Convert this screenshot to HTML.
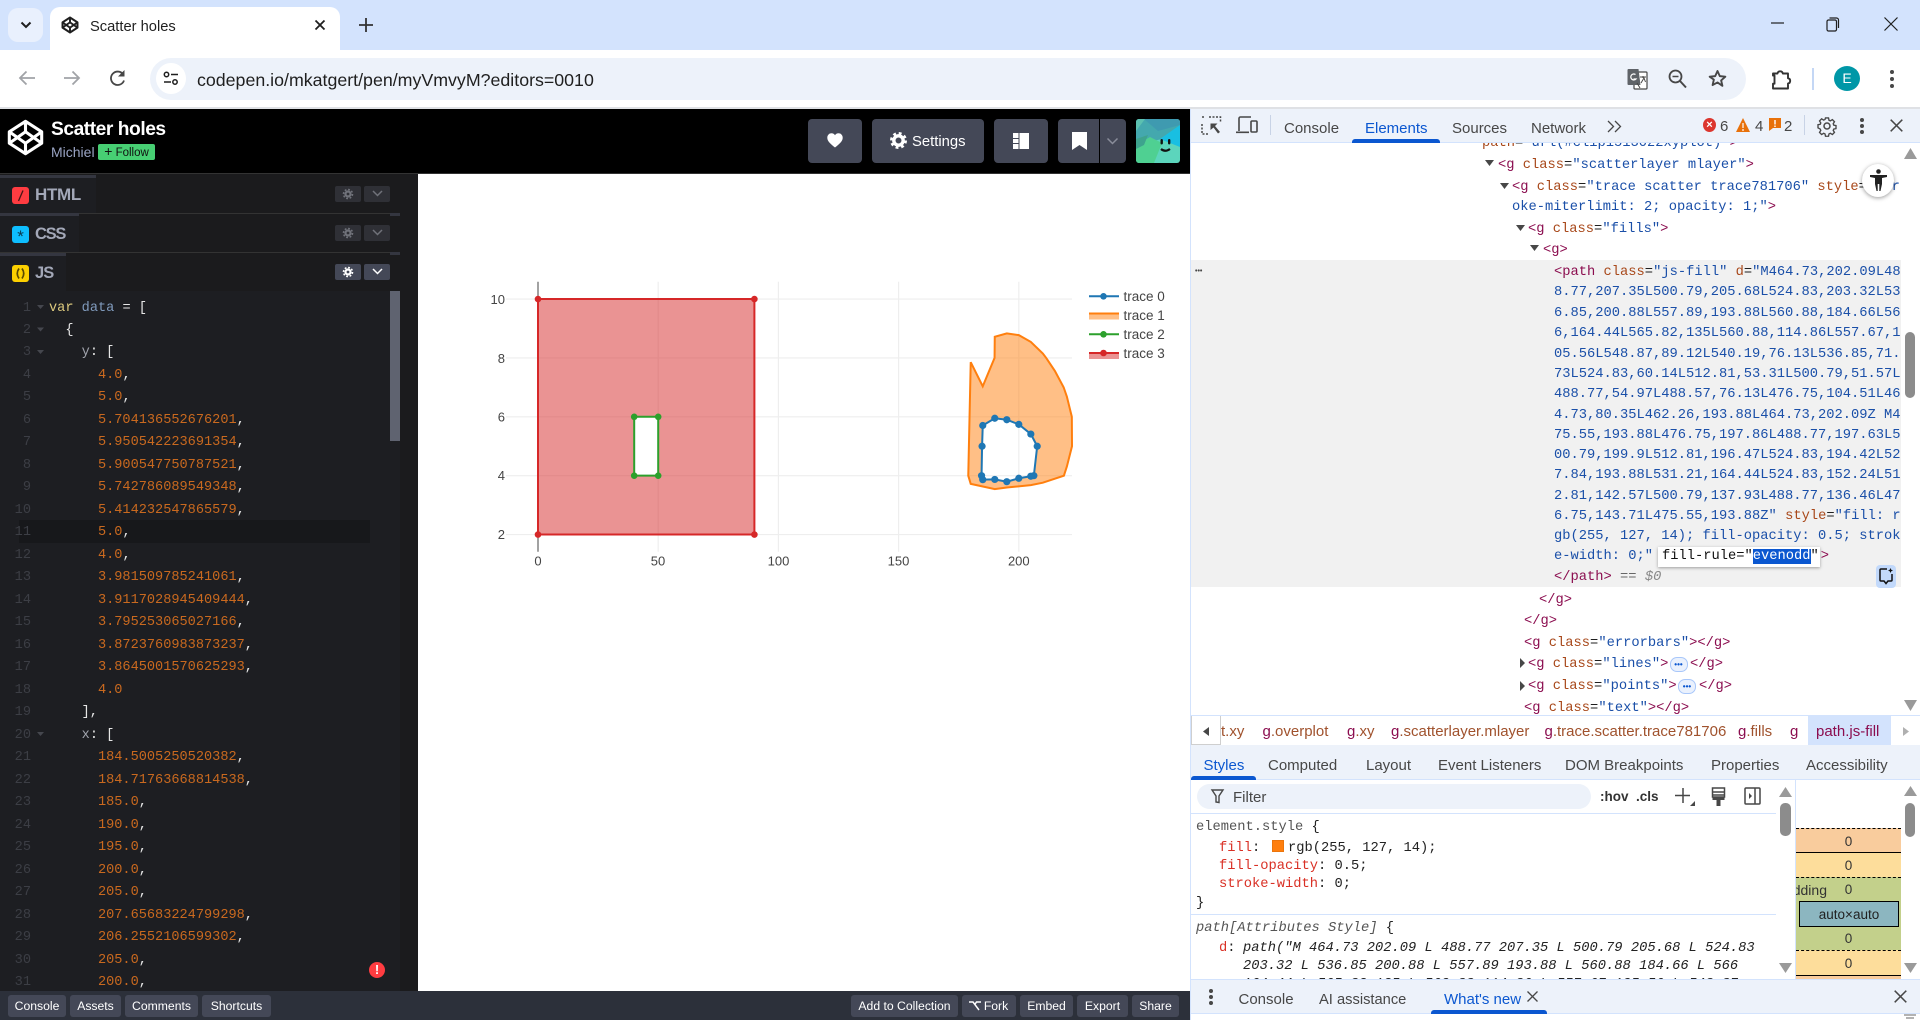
<!DOCTYPE html>
<html lang="en"><head><meta charset="utf-8"><title>Scatter holes</title>
<style>
*{box-sizing:border-box}
html,body{margin:0;padding:0;width:1920px;height:1020px;overflow:hidden;background:#fff;font-family:"Liberation Sans",sans-serif;color:#1f1f1f}
.a{position:absolute}
.t{position:absolute;white-space:nowrap;line-height:20px;font-size:15px;margin-top:1px}
.m{font-family:"Liberation Mono",monospace;font-size:13.75px;white-space:pre;position:absolute;line-height:20px;margin-top:1px}
svg{position:absolute;overflow:visible}
.btn{position:absolute;top:119px;height:44px;background:#444857;border-radius:4px}
.foot{position:absolute;top:995px;height:22px;background:#444857;border-radius:3px;color:#fff;font-size:12.2px;line-height:22px;text-align:center;white-space:nowrap}
.row{position:absolute;left:0;width:400px;background:#1b1b1d}
.tab{position:absolute;left:0;background:#1d1e22;border-top:3px solid #343640}
.sq{position:absolute;left:12px;width:17px;height:17px;border-radius:3px}
.lbl{position:absolute;left:35px;font-weight:bold;font-size:16.5px;line-height:20px;color:#a3a8b8;white-space:nowrap;letter-spacing:-.3px}
.mini{position:absolute;width:26px;height:16px;border-radius:2px;background:#2f3036}
pre{margin:0;font-family:"Liberation Mono",monospace;font-size:13.6px;line-height:22.48px;position:absolute}
.n{color:#c9691f}.w{color:#e6e6e6}.k{color:#a2a5ae}.v{color:#ddca7e}.d{color:#809bbd}
.tg{color:#8b0d4f}.at{color:#a8481a}.vl{color:#1a4fa8}
.tb{color:#474747}
.r{color:#d93025}
.bc{font-size:15px;color:#a0522d}.bc b{font-weight:normal;color:#8b0d4f}
.bm{position:absolute;left:1796px;width:105px}
.z{position:absolute;left:1796px;width:105px;text-align:center;font-size:13.5px;line-height:18px;color:#333;margin-top:1px}
</style></head><body>

<!-- tab strip -->
<div class="a" style="left:0;top:0;width:1920px;height:50px;background:#d3e3fd"></div>
<div class="a" style="left:8px;top:8px;width:35px;height:34px;background:#e9f0fd;border-radius:10px"></div>
<svg style="left:20px;top:20px" width="12" height="10" viewBox="0 0 12 10"><path d="M1.500 2.500 6 7l4.500-4.500" fill="none" stroke="#1f1f1f" stroke-width="2"/></svg>
<div class="a" style="left:50px;top:7px;width:290px;height:43px;background:#fff;border-radius:10px 10px 0 0"></div>
<svg style="left:61px;top:16px" width="18" height="18" viewBox="0 0 24 24"><path d="M12 2 22 8.500v7L12 22 2 15.500v-7zM12 2v6.500M12 15.500V22M2 8.500l10 7 10-7M2 15.500l10-7 10 7" fill="none" stroke="#1f1f1f" stroke-width="2.600" stroke-linejoin="round"/></svg>
<div class="t" style="left:90px;top:16px;font-size:14.700px">Scatter holes</div>
<svg style="left:314px;top:19px" width="12" height="12" viewBox="0 0 12 12"><path d="M1.500 1.500l9 9M10.500 1.500l-9 9" stroke="#1f1f1f" stroke-width="1.800"/></svg>
<svg style="left:359px;top:18px" width="14" height="14" viewBox="0 0 14 14"><path d="M7 0v14M0 7h14" stroke="#333" stroke-width="1.800"/></svg>
<svg style="left:1771px;top:22px" width="14" height="3"><path d="M0 1h13" stroke="#1f1f1f" stroke-width="1.200"/></svg>
<svg style="left:1826px;top:17px" width="14" height="15" viewBox="0 0 14 15"><rect x="1" y="3" width="9.500" height="11" rx="1.500" fill="none" stroke="#1f1f1f" stroke-width="1.200"/><path d="M3.500 1h7a2 2 0 0 1 2 2v8" fill="none" stroke="#1f1f1f" stroke-width="1.200"/></svg>
<svg style="left:1884px;top:17px" width="14" height="14" viewBox="0 0 14 14"><path d="M.500.500l13 13M13.500.500l-13 13" stroke="#1f1f1f" stroke-width="1.200"/></svg>

<!-- toolbar -->
<div class="a" style="left:0;top:50px;width:1920px;height:57px;background:#fff;border-radius:10px 10px 0 0"></div>
<div class="a" style="left:0;top:107px;width:1920px;height:2px;background:#dfe1e5"></div>
<div class="a" style="left:150px;top:58px;width:1596px;height:42px;background:#edf2fa;border-radius:21px"></div>
<div class="a" style="left:156px;top:63px;width:30px;height:31px;background:#fff;border-radius:50%"></div>
<svg style="left:18px;top:70px" width="18" height="16" viewBox="0 0 18 16"><path d="M17 8H2M8.500 1.500 2 8l6.500 6.500" fill="none" stroke="#a1a3a7" stroke-width="1.800"/></svg>
<svg style="left:63px;top:70px" width="18" height="16" viewBox="0 0 18 16"><path d="M1 8h15M9.500 1.500 16 8l-6.500 6.500" fill="none" stroke="#a1a3a7" stroke-width="1.800"/></svg>
<svg style="left:109px;top:70px" width="18" height="17" viewBox="0 0 18 17"><path d="M15 10.500A6.700 6.700 0 1 1 14 4.200" fill="none" stroke="#474747" stroke-width="1.800"/><path d="M15.500 0v6.500H9z" fill="#474747"/></svg>
<svg style="left:163px;top:71px" width="16" height="15" viewBox="0 0 16 15"><circle cx="3.500" cy="3.500" r="2.200" fill="none" stroke="#1f1f1f" stroke-width="1.500"/><circle cx="12" cy="11" r="2.200" fill="none" stroke="#1f1f1f" stroke-width="1.500"/><path d="M8 3.500h7M1 11h7" stroke="#1f1f1f" stroke-width="1.500"/></svg>
<div class="t" style="left:197px;top:68px;font-size:17.800px;color:#1f1f1f;margin-top:2px">codepen.io/mkatgert/pen/myVmvyM?editors=0010</div>
<svg style="left:1627px;top:68px" width="21" height="22" viewBox="0 0 21 22"><rect x="7" y="4" width="13" height="17" rx="1" fill="#fff" stroke="#474747" stroke-width="1.200"/><path d="M1.500 1h10l2 16h-12a1 1 0 0 1-1-1V2a1 1 0 0 1 1-1z" fill="#5f6368"/><path d="M10 15l3 5" stroke="#474747"/><path d="M13 9h6M16 8v2M14 15l3-5 1.500 4" fill="none" stroke="#474747" stroke-width="1"/><path d="M8.500 6.500A3 3 0 1 0 9 11H6.500" fill="none" stroke="#fff" stroke-width="1.200"/></svg>
<svg style="left:1668px;top:69px" width="19" height="20" viewBox="0 0 19 20"><circle cx="7.500" cy="7.500" r="6" fill="none" stroke="#474747" stroke-width="1.800"/><path d="M12 12l6 6.500" stroke="#474747" stroke-width="2"/><path d="M4.500 7.500h6" stroke="#474747" stroke-width="1.500"/></svg>
<svg style="left:1708px;top:69px" width="19" height="19" viewBox="0 0 24 24"><path d="M12 2.500l2.900 6.500 7 .7-5.300 4.700 1.600 6.900L12 17l-6.200 3.300 1.600-6.900L2.100 9.700l7-.7z" fill="none" stroke="#474747" stroke-width="2.400" stroke-linejoin="round"/></svg>
<svg style="left:1771px;top:68px" width="21" height="22" viewBox="0 0 21 22"><path d="M2 5.500h4.500a2.700 2.700 0 0 1 5.300 0H17v4.700a2.700 2.700 0 0 1 0 5.300v5H2v-4.800a0 0 0 0 0 0 0h1.500V7.500H2z" fill="none" stroke="#333" stroke-width="1.900" stroke-linejoin="round"/></svg>
<div class="a" style="left:1812px;top:68px;width:2px;height:22px;background:#c4d7f5"></div>
<div class="a" style="left:1834px;top:66px;width:26px;height:25px;border-radius:50%;background:#0097a7;color:#fff;font-size:14px;line-height:25px;text-align:center">E</div>
<svg style="left:1889px;top:69px" width="6" height="20"><circle cx="3" cy="3" r="2" fill="#474747"/><circle cx="3" cy="10" r="2" fill="#474747"/><circle cx="3" cy="17" r="2" fill="#474747"/></svg>

<!-- codepen header -->
<div class="a" style="left:0;top:109px;width:1190px;height:65px;background:#000;border-bottom:1px solid #333"></div>
<svg style="left:7px;top:119px" width="37" height="37" viewBox="0 0 24 24"><path d="M12 1.500 22.500 8.300v7.400L12 22.500 1.500 15.700V8.300zM12 1.500v6.800M12 15.700v6.800M1.500 8.300l10.500 7.400 10.500-7.400M1.500 15.700 12 8.300l10.500 7.400" fill="none" stroke="#fff" stroke-width="2" stroke-linejoin="round"/></svg>
<div class="t" style="left:51px;top:119px;font-size:19.200px;font-weight:bold;color:#fff;line-height:22px;letter-spacing:-.45px;margin-top:0">Scatter holes</div>
<div class="t" style="left:51px;top:142px;font-size:14px;color:#9aa4c4;margin-top:0">Michiel</div>
<div class="a" style="left:98px;top:144px;width:57px;height:16px;background:#47cf73;border-radius:2px;color:#111;font-size:11.500px;line-height:16px;text-align:center;white-space:nowrap"><span style="font-size:14px;line-height:14px">+</span> Follow</div>

<div class="btn" style="left:808px;width:54px"></div>
<svg style="left:827px;top:133px" width="16" height="15" viewBox="0 0 16 15"><path d="M8 14.500C3 10.500.300 8 .300 4.700.300 2 2.300.300 4.500.300 6 .300 7.300 1 8 2.300 8.700 1 10 .300 11.500.300c2.200 0 4.200 1.700 4.200 4.400C15.700 8 13 10.500 8 14.500z" fill="#fff"/></svg>
<div class="btn" style="left:872px;width:112px"></div>
<svg style="left:890px;top:132px" width="17" height="17" viewBox="0 0 20 20"><circle cx="10" cy="10" r="5.500" fill="none" stroke="#fff" stroke-width="4"/><circle cx="10" cy="10" r="8.500" fill="none" stroke="#fff" stroke-width="3" stroke-dasharray="3.340 3.340"/></svg>
<div class="t" style="left:912px;top:131px;color:#fff;font-size:14.800px">Settings</div>
<div class="btn" style="left:994px;width:54px"></div>
<svg style="left:1013px;top:133px" width="16" height="16" viewBox="0 0 16 16"><rect x="0" y="0" width="5.500" height="5" fill="#fff"/><rect x="0" y="6" width="5.500" height="4" fill="#fff"/><rect x="0" y="11" width="5.500" height="5" fill="#fff"/><rect x="6.500" y="0" width="9.500" height="16" fill="#fff"/></svg>
<div class="btn" style="left:1058px;width:68px"></div>
<div class="a" style="left:1099px;top:119px;width:1px;height:44px;background:#000"></div>
<svg style="left:1072px;top:132px" width="15" height="18" viewBox="0 0 15 18"><path d="M0 0h15v18l-7.500-5L0 18z" fill="#fff"/></svg>
<svg style="left:1107px;top:138px" width="11" height="7" viewBox="0 0 11 7"><path d="M.500.500 5.500 5.500 10.500.500" fill="none" stroke="#8a8d9a" stroke-width="1.500"/></svg>
<svg style="left:1136px;top:119px" width="44" height="44" viewBox="0 0 44 44"><defs><clipPath id="av"><rect width="44" height="44" rx="3"/></clipPath></defs><g clip-path="url(#av)"><rect width="44" height="44" fill="#5cd5bc"/><path d="M0 0h44v12L26 20 0 26z" fill="#44a8ae"/><path d="M8 0h36v6L22 12z" fill="#3f9ab0"/><path d="M0 0h9L0 12z" fill="#5cc0b0"/><path d="M44 6v22L24 20z" fill="#19bfe2"/><path d="M0 26l14-8 12 6-8 20H0z" fill="#4fd092"/><path d="M0 20l12-4-4 10-8 4z" fill="#3ea38e"/><rect x="24.500" y="20" width="2.400" height="5.500" rx="1.200" fill="#111"/><rect x="32" y="20" width="2.400" height="5.500" rx="1.200" fill="#111"/><path d="M25 30q4 3.500 9 0" fill="none" stroke="#111" stroke-width="2.200"/></g></svg>

<!-- editor column -->
<div class="a" style="left:0;top:174px;width:418px;height:817px;background:#1b1b1d"></div>
<div class="row" style="top:213px;height:1px;background:#333"></div>
<div class="row" style="top:252px;height:1px;background:#333"></div>
<div class="tab" style="top:175px;width:96px;height:38px"></div>
<div class="tab" style="top:213px;width:79px;height:39px"></div>
<div class="tab" style="top:253px;width:66px;height:38px"></div>
<div class="a" style="left:390px;top:213px;width:10px;height:3px;background:#343640"></div>
<div class="a" style="left:390px;top:252px;width:10px;height:3px;background:#343640"></div>
<div class="sq" style="top:187px;background:#ff3c41"></div>
<svg style="left:12px;top:187px" width="17" height="17"><path d="M11 3.500 6.500 14" stroke="#4a1416" stroke-width="1.300"/></svg>
<div class="sq" style="top:226px;background:#0ebeff"></div>
<div class="a" style="left:12px;top:226px;width:17px;height:17px;text-align:center;color:#0a3a50;font-size:17px;line-height:22px">*</div>
<div class="sq" style="top:265px;background:#fcd000"></div>
<svg style="left:12px;top:265px" width="17" height="17"><path d="M7 3.500Q3.500 8.500 7 13.500M10 3.500q3.500 5 0 10" fill="none" stroke="#5a4a00" stroke-width="1.700"/></svg>
<div class="lbl" style="top:185px;font-size:17px">HTML</div>
<div class="lbl" style="top:224px;letter-spacing:-1.300px">CSS</div>
<div class="lbl" style="top:263px;letter-spacing:-.9px">JS</div>

<div class="mini" style="left:335px;top:186px"></div><div class="mini" style="left:364px;top:186px"></div>
<div class="mini" style="left:335px;top:225px"></div><div class="mini" style="left:364px;top:225px"></div>
<div class="mini" style="left:335px;top:264px;background:#444857"></div><div class="mini" style="left:364px;top:264px;background:#444857"></div>
<svg style="left:0;top:0" width="417" height="300">
<g fill="none" stroke="#70727a"><g transform="translate(348,194)"><circle r="2.500" stroke-width="2.200"/><circle r="4.500" stroke-width="1.600" stroke-dasharray="1.800 1.730"/></g><g transform="translate(348,233)"><circle r="2.500" stroke-width="2.200"/><circle r="4.500" stroke-width="1.600" stroke-dasharray="1.800 1.730"/></g>
<path d="M373 191l4.500 4.500 4.500-4.500M373 230l4.500 4.500 4.500-4.500" stroke-width="1.500"/></g>
<g fill="none" stroke="#fff"><g transform="translate(348,272)"><circle r="2.500" stroke-width="2.200"/><circle r="4.500" stroke-width="1.600" stroke-dasharray="1.800 1.730"/></g><path d="M373 269l4.500 4.500 4.500-4.500" stroke-width="1.500"/></g>
</svg>

<!-- code -->
<div class="a" style="left:0;top:291px;width:400px;height:700px;background:#1d1e22;overflow:hidden">
<div class="a" style="left:19px;top:229px;width:351px;height:23px;background:#17181b"></div>
<pre style="left:0;top:6.500px;width:31px;text-align:right;color:#3c3e45">1
2
3
4
5
6
7
8
9
10
11
12
13
14
15
16
17
18
19
20
21
22
23
24
25
26
27
28
29
30
31
32</pre>
<pre class="w" style="left:49px;top:6.500px"><span class="v">var</span> <span class="d">data</span> = [
  {
    <span class="k">y</span>: [
      <span class="n">4.0</span>,
      <span class="n">5.0</span>,
      <span class="n">5.704136552676201</span>,
      <span class="n">5.950542223691354</span>,
      <span class="n">5.900547750787521</span>,
      <span class="n">5.742786089549348</span>,
      <span class="n">5.414232547865579</span>,
      <span class="n">5.0</span>,
      <span class="n">4.0</span>,
      <span class="n">3.981509785241061</span>,
      <span class="n">3.9117028945409444</span>,
      <span class="n">3.795253065027166</span>,
      <span class="n">3.8723760983873237</span>,
      <span class="n">3.8645001570625293</span>,
      <span class="n">4.0</span>
    ],
    <span class="k">x</span>: [
      <span class="n">184.5005250520382</span>,
      <span class="n">184.71763668814538</span>,
      <span class="n">185.0</span>,
      <span class="n">190.0</span>,
      <span class="n">195.0</span>,
      <span class="n">200.0</span>,
      <span class="n">205.0</span>,
      <span class="n">207.65683224799298</span>,
      <span class="n">206.2552106599302</span>,
      <span class="n">205.0</span>,
      <span class="n">200.0</span>,
      <span class="n">195.0</span></pre>
<svg style="left:37px;top:2px" width="8" height="460"><path d="M0 12h7l-3.500 4zM0 34.500h7l-3.500 4zM0 57h7l-3.500 4zM0 439h7l-3.500 4z" fill="#45474e"/></svg>
<div class="a" style="left:390px;top:0;width:10px;height:150px;background:#5f6370"></div>
</div>
<div class="a" style="left:369px;top:962px;width:16px;height:16px;border-radius:50%;background:#ff3c41;color:#fff;font-weight:bold;font-size:13px;line-height:16px;text-align:center">!</div>

<!-- preview -->
<div class="a" style="left:418px;top:174px;width:772px;height:817px;background:#fff"></div>
<svg style="left:0;top:0" width="1920" height="1020">
<g transform="translate(506,281.800)">
<g stroke="#eee" stroke-width="1.200" fill="none">
<path d="M152.200 0V270M272.400 0V270M392.600 0V270M512.800 0V270"/>
<path d="M0 17.250H566M0 76.130H566M0 135H566M0 193.880H566M0 252.750H566"/>
</g>
<path d="M32 0V270" stroke="#444" stroke-width="1"/>
<path fill-rule="evenodd" fill="#d62728" fill-opacity=".5" d="M32 17.250H248.400V252.750H32ZM128.200 135H152.200V193.880H128.200Z"/>
<path fill-rule="evenodd" fill="#ff7f0e" fill-opacity=".5" d="M464.730,202.090L488.770,207.350L500.790,205.680L524.830,203.320L536.850,200.880L557.890,193.880L560.880,184.660L566,164.440L565.820,135L560.880,114.860L557.670,105.560L548.870,89.120L540.190,76.130L536.850,71.730L524.830,60.140L512.810,53.310L500.790,51.570L488.770,54.970L488.570,76.130L476.750,104.510L464.730,80.350L462.260,193.880L464.730,202.090Z M475.550,193.880L476.750,197.860L488.770,197.630L500.790,199.900L512.810,196.470L524.830,194.420L527.840,193.880L531.210,164.440L524.830,152.240L512.810,142.570L500.790,137.930L488.770,136.460L476.750,143.710L475.550,193.880Z"/>
<path fill="none" stroke="#ff7f0e" stroke-width="2" d="M464.730,202.090L488.770,207.350L500.790,205.680L524.830,203.320L536.850,200.880L557.890,193.880L560.880,184.660L566,164.440L565.820,135L560.880,114.860L557.670,105.560L548.870,89.120L540.190,76.130L536.850,71.730L524.830,60.140L512.810,53.310L500.790,51.570L488.770,54.970L488.570,76.130L476.750,104.510L464.730,80.350L462.260,193.880L464.730,202.090Z"/>
<path fill="none" stroke="#1f77b4" stroke-width="2" d="M475.550,193.880L476.070,164.440L476.750,143.710L488.770,136.460L500.790,137.930L512.810,142.570L524.830,152.240L531.210,164.440L527.840,193.880L524.830,194.420L512.810,196.470L500.790,199.900L488.770,197.630L476.750,197.860L475.550,193.880Z"/>
<g fill="#1f77b4"><circle cx="475.550" cy="193.880" r="3.600"/><circle cx="476.070" cy="164.440" r="3.600"/><circle cx="476.750" cy="143.710" r="3.600"/><circle cx="488.770" cy="136.460" r="3.600"/><circle cx="500.790" cy="137.930" r="3.600"/><circle cx="512.810" cy="142.570" r="3.600"/><circle cx="524.830" cy="152.240" r="3.600"/><circle cx="531.210" cy="164.440" r="3.600"/><circle cx="527.840" cy="193.880" r="3.600"/><circle cx="524.830" cy="194.420" r="3.600"/><circle cx="512.810" cy="196.470" r="3.600"/><circle cx="500.790" cy="199.900" r="3.600"/><circle cx="488.770" cy="197.630" r="3.600"/><circle cx="476.750" cy="197.860" r="3.600"/></g>
<path fill="none" stroke="#d62728" stroke-width="2" d="M32 17.250H248.400V252.750H32Z"/>
<g fill="#d62728"><circle cx="32" cy="17.250" r="3.300"/><circle cx="248.400" cy="17.250" r="3.300"/><circle cx="248.400" cy="252.750" r="3.300"/><circle cx="32" cy="252.750" r="3.300"/></g>
<path fill="none" stroke="#2ca02c" stroke-width="2" d="M128.200 135H152.200V193.880H128.200Z"/>
<g fill="#2ca02c"><circle cx="128.200" cy="135" r="3.300"/><circle cx="152.200" cy="135" r="3.300"/><circle cx="152.200" cy="193.880" r="3.300"/><circle cx="128.200" cy="193.880" r="3.300"/></g>
</g>
<g font-family="Liberation Sans" font-size="13" fill="#444">
<g text-anchor="end"><text x="505" y="304">10</text><text x="505" y="363">8</text><text x="505" y="421.500">6</text><text x="505" y="480">4</text><text x="505" y="539">2</text></g>
<g text-anchor="middle"><text x="538" y="565.500">0</text><text x="658" y="565.500">50</text><text x="778.500" y="565.500">100</text><text x="898.500" y="565.500">150</text><text x="1018.800" y="565.500">200</text></g>
<g font-size="13.500"><text x="1123.500" y="301">trace 0</text><text x="1123.500" y="320">trace 1</text><text x="1123.500" y="339">trace 2</text><text x="1123.500" y="358">trace 3</text></g>
</g>
<path d="M1089 296.300h30" stroke="#1f77b4" stroke-width="2"/><circle cx="1103.500" cy="296.300" r="3.300" fill="#1f77b4"/>
<rect x="1089" y="312.500" width="30" height="7" fill="#ff7f0e" fill-opacity=".5"/><path d="M1089 313.500h30" stroke="#ff7f0e" stroke-width="2"/>
<path d="M1089 334.300h30" stroke="#2ca02c" stroke-width="2"/><circle cx="1103.500" cy="334.300" r="3.300" fill="#2ca02c"/>
<rect x="1089" y="352" width="30" height="7" fill="#d62728" fill-opacity=".5"/><path d="M1089 353h30" stroke="#d62728" stroke-width="2"/><circle cx="1103.500" cy="353" r="3.300" fill="#d62728"/>
</svg>

<!-- footer -->
<div class="a" style="left:0;top:991px;width:1190px;height:29px;background:#2c303a"></div>
<div class="foot" style="left:8px;width:58px">Console</div>
<div class="foot" style="left:70px;width:51px">Assets</div>
<div class="foot" style="left:125px;width:73px">Comments</div>
<div class="foot" style="left:202px;width:69px">Shortcuts</div>
<div class="foot" style="left:851px;width:107px">Add to Collection</div>
<div class="foot" style="left:962px;width:54px;padding-left:14px">Fork</div>
<svg style="left:969px;top:1001px" width="12" height="10" viewBox="0 0 12 10"><path d="M0 1h4l6 8M5.500 4 7.500 1H12" fill="none" stroke="#fff" stroke-width="1.500"/></svg>
<div class="foot" style="left:1020px;width:53px">Embed</div>
<div class="foot" style="left:1077px;width:51px">Export</div>
<div class="foot" style="left:1132px;width:47px">Share</div>

<!-- devtools -->
<div class="a" style="left:1190px;top:109px;width:730px;height:911px;background:#fff;border-left:1px solid #d3e3fd"></div>
<div class="a" style="left:1191px;top:109px;width:729px;height:34px;background:#edf2fa;border-bottom:1px solid #d3e3fd"></div>
<svg style="left:1201px;top:116px" width="21" height="19" viewBox="0 0 21 19"><path d="M8 1H19.500V7M1 8V18H8M1 1h3" fill="none" stroke="#474747" stroke-width="1.500" stroke-dasharray="2 1.500"/><path d="M9.500 7.500h7l-2.500 2.500 5 6-2 1.500-4.500-6-3 2.500z" fill="#474747"/></svg>
<svg style="left:1236px;top:116px" width="22" height="18" viewBox="0 0 22 18"><path d="M3 15V2.500A1.500 1.500 0 0 1 4.500 1H15M0 16.300h13" fill="none" stroke="#474747" stroke-width="1.600"/><rect x="15" y="5" width="6" height="11" rx="1" fill="none" stroke="#474747" stroke-width="1.600"/></svg>
<div class="a" style="left:1270px;top:115px;width:1px;height:20px;background:#c8d3e6"></div>
<div class="t tb" style="left:1284px;top:118px">Console</div>
<div class="t" style="left:1365px;top:118px;color:#0b57d0">Elements</div>
<div class="a" style="left:1352px;top:139px;width:88px;height:4px;background:#0b57d0;border-radius:3px 3px 0 0"></div>
<div class="t tb" style="left:1452px;top:118px">Sources</div>
<div class="t tb" style="left:1531px;top:118px">Network</div>
<svg style="left:1607px;top:120px" width="15" height="13" viewBox="0 0 15 13"><path d="M1 1l5.500 5.500L1 12M8 1l5.500 5.500L8 12" fill="none" stroke="#474747" stroke-width="1.300"/></svg>
<div class="a" style="left:1703px;top:118px;width:13px;height:14px;border-radius:50%;background:#dc362e;color:#fff;font-size:11px;line-height:14px;text-align:center;font-weight:bold">×</div>
<div class="t tb" style="left:1720px;top:116px">6</div>
<svg style="left:1736px;top:118px" width="14" height="14" viewBox="0 0 14 14"><path d="M7 0l7 14H0z" fill="#e8710a"/><path d="M7 5v5M7 11v2" stroke="#fff" stroke-width="1.200"/></svg>
<div class="t tb" style="left:1755px;top:116px">4</div>
<svg style="left:1769px;top:118px" width="12" height="13" viewBox="0 0 12 13"><path d="M0 0h12v10H4l-4 3z" fill="#e8710a"/><path d="M6 2v4.500M6 7.500v1.500" stroke="#fff" stroke-width="1.400"/></svg>
<div class="t tb" style="left:1784px;top:116px">2</div>
<div class="a" style="left:1804px;top:115px;width:1px;height:20px;background:#c8d3e6"></div>
<svg style="left:1817px;top:116px" width="20" height="20" viewBox="0 0 20 20"><circle cx="10" cy="10" r="3" fill="none" stroke="#474747" stroke-width="1.500"/><path d="M8.300 1h3.400l.5 2.600 1.500.7 2.300-1.400 2.300 2.400-1.400 2.200.6 1.500 2.500.5v3.400l-2.500.5-.6 1.500 1.400 2.200-2.300 2.400-2.300-1.400-1.500.7-.5 2.600H8.300l-.5-2.600-1.500-.7-2.300 1.400-2.300-2.400 1.400-2.200-.6-1.500L0 12v0-3.400l2.500-.5.6-1.500L1.700 4.400 4 2l2.300 1.400 1.500-.7z" fill="none" stroke="#474747" stroke-width="1.500" transform="translate(1 1) scale(.9)"/></svg>
<svg style="left:1859px;top:117px" width="6" height="18"><circle cx="3" cy="3" r="2" fill="#474747"/><circle cx="3" cy="9" r="2" fill="#474747"/><circle cx="3" cy="15" r="2" fill="#474747"/></svg>
<svg style="left:1890px;top:119px" width="13" height="13" viewBox="0 0 13 13"><path d="M.700.700l11.600 11.600M12.300.700.700 12.300" stroke="#474747" stroke-width="1.500"/></svg>

<!-- elements panel -->
<div class="a" style="left:1191px;top:143px;width:710px;height:572px;overflow:hidden">
<div class="a" style="left:0;top:117px;width:710px;height:327px;background:#f1f1f1"></div>
<div class="m" style="left:291px;top:-10px"><span class="at">path</span>=<span class="vl">"url(#clip15130z2xyplot)"</span><span class="tg">&gt;</span></div>
<div class="m" style="left:307px;top:12px"><span class="tg">&lt;g</span> <span class="at">class</span>=<span class="vl">"scatterlayer mlayer"</span><span class="tg">&gt;</span></div>
<div class="m" style="left:321px;top:34px"><span class="tg">&lt;g</span> <span class="at">class</span>=<span class="vl">"trace scatter trace781706"</span> <span class="at">style</span>=<span class="vl">"str</span></div>
<div class="m vl" style="left:321px;top:54px">oke-miterlimit: 2; opacity: 1;"<span class="tg">&gt;</span></div>
<div class="m" style="left:337px;top:76px"><span class="tg">&lt;g</span> <span class="at">class</span>=<span class="vl">"fills"</span><span class="tg">&gt;</span></div>
<div class="m tg" style="left:352px;top:97px">&lt;g&gt;</div>
<div class="m" style="left:363px;top:119px"><span class="tg">&lt;path</span> <span class="at">class</span>=<span class="vl">"js-fill"</span> <span class="at">d</span>=<span class="vl">"M464.73,202.09L48</span></div>
<div class="m vl" style="left:363px;top:139px">8.77,207.35L500.79,205.68L524.83,203.32L53</div>
<div class="m vl" style="left:363px;top:159.500px">6.85,200.88L557.89,193.88L560.88,184.66L56</div>
<div class="m vl" style="left:363px;top:180px">6,164.44L565.82,135L560.88,114.86L557.67,1</div>
<div class="m vl" style="left:363px;top:200.500px">05.56L548.87,89.12L540.19,76.13L536.85,71.</div>
<div class="m vl" style="left:363px;top:220.500px">73L524.83,60.14L512.81,53.31L500.79,51.57L</div>
<div class="m vl" style="left:363px;top:241px">488.77,54.97L488.57,76.13L476.75,104.51L46</div>
<div class="m vl" style="left:363px;top:261.500px">4.73,80.35L462.26,193.88L464.73,202.09Z M4</div>
<div class="m vl" style="left:363px;top:281.500px">75.55,193.88L476.75,197.86L488.77,197.63L5</div>
<div class="m vl" style="left:363px;top:302px">00.79,199.9L512.81,196.47L524.83,194.42L52</div>
<div class="m vl" style="left:363px;top:322px">7.84,193.88L531.21,164.44L524.83,152.24L51</div>
<div class="m vl" style="left:363px;top:342.500px">2.81,142.57L500.79,137.93L488.77,136.46L47</div>
<div class="m" style="left:363px;top:363px"><span class="vl">6.75,143.71L475.55,193.88Z"</span> <span class="at">style</span>=<span class="vl">"fill: r</span></div>
<div class="m vl" style="left:363px;top:383px">gb(255, 127, 14); fill-opacity: 0.5; strok</div>
<div class="m vl" style="left:363px;top:403px">e-width: 0;"</div>
<div class="a" style="left:467px;top:403.500px;width:162px;height:20px;background:#fff;box-shadow:0 1px 3px rgba(0,0,0,.35)"></div>
<div class="m" style="left:471px;top:403px;color:#111">fill-rule="<span style="background:#0b57d0;color:#fff">evenodd</span>"<span class="tg" style="margin-left:2px">&gt;</span></div>
<div class="m" style="left:363px;top:424px"><span class="tg">&lt;/path&gt;</span> <span style="color:#666">==</span> <i style="color:#888">$0</i></div>
<div class="m tg" style="left:348px;top:447px">&lt;/g&gt;</div>
<div class="m tg" style="left:333px;top:468px">&lt;/g&gt;</div>
<div class="m" style="left:333px;top:489.500px"><span class="tg">&lt;g</span> <span class="at">class</span>=<span class="vl">"errorbars"</span><span class="tg">&gt;&lt;/g&gt;</span></div>
<div class="m" style="left:337px;top:511px"><span class="tg">&lt;g</span> <span class="at">class</span>=<span class="vl">"lines"</span><span class="tg">&gt;</span></div>
<div class="a" style="left:478.500px;top:514px;width:18px;height:15px;border:1px solid #a8c7fa;border-radius:7px;background:#eaf1fd;color:#0b57d0;font-size:8px;line-height:13px;text-align:center;font-weight:bold">•••</div>
<div class="m tg" style="left:499px;top:511px">&lt;/g&gt;</div>
<div class="m" style="left:337px;top:533px"><span class="tg">&lt;g</span> <span class="at">class</span>=<span class="vl">"points"</span><span class="tg">&gt;</span></div>
<div class="a" style="left:487px;top:536px;width:18px;height:15px;border:1px solid #a8c7fa;border-radius:7px;background:#eaf1fd;color:#0b57d0;font-size:8px;line-height:13px;text-align:center;font-weight:bold">•••</div>
<div class="m tg" style="left:508px;top:533px">&lt;/g&gt;</div>
<div class="m" style="left:333px;top:555px"><span class="tg">&lt;g</span> <span class="at">class</span>=<span class="vl">"text"</span><span class="tg">&gt;&lt;/g&gt;</span></div>
<svg style="left:0;top:0" width="710" height="560"><g fill="#474747"><path d="M294 17h9l-4.500 6zM309 40h9l-4.500 6zM325 82h9l-4.500 6zM339 102h9l-4.500 6zM329 515v10l5-5zM329 538v10l5-5z"/></g></svg>
<div class="a" style="left:4px;top:124px;color:#474747;font-size:7px;line-height:9px;font-weight:bold">•••</div>
</div>
<svg style="left:1903px;top:148px" width="15" height="12"><path d="M7.500 0l6.500 11H1z" fill="#9a9a9a"/></svg>
<div class="a" style="left:1905px;top:332px;width:10px;height:66px;background:#8c8c8c;border-radius:5px"></div>
<svg style="left:1903px;top:700px" width="15" height="12"><path d="M7.500 11l6.500-11H1z" fill="#9a9a9a"/></svg>
<div class="a" style="left:1862px;top:164px;width:32px;height:33px;background:#fff;border-radius:50%;box-shadow:0 1px 4px rgba(0,0,0,.4)"></div>
<svg style="left:1870px;top:169px" width="17" height="22" viewBox="0 0 17 22"><circle cx="8.500" cy="2.500" r="2.300" fill="#222"/><path d="M0 6h17v2l-5 1v6l-1.500 7H9.300V15H7.700v7H6.500L5 15V9L0 8z" fill="#222"/></svg>
<div class="a" style="left:1876px;top:565px;width:20px;height:23px;background:#c2d9fb;border-radius:4px"></div>
<svg style="left:1879px;top:568px" width="14" height="17" viewBox="0 0 14 17"><path d="M8 1H2a1 1 0 0 0-1 1v10a1 1 0 0 0 1 1h3l2 2.500L9 13h3a1 1 0 0 0 1-1V6" fill="none" stroke="#111" stroke-width="1.500"/><path d="M11.500 0l.8 1.700 1.700.8-1.700.8-.8 1.700-.8-1.700-1.700-.8 1.700-.8z" fill="#111"/></svg>

<!-- breadcrumb -->
<div class="a" style="left:1191px;top:715px;width:729px;height:1px;background:#d3e3fd"></div>
<div class="a" style="left:1191px;top:716px;width:729px;height:29px;background:#fff;overflow:hidden"></div>
<div class="a" style="left:1191px;top:716px;width:30px;height:29px;background:#fff;border:1px solid #cfcfcf;border-top:0"></div>
<svg style="left:1203px;top:727px" width="6" height="9"><path d="M6 0v9L0 4.500z" fill="#474747"/></svg>
<div class="t bc" style="left:1221px;top:721px">t.xy</div>
<div class="t bc" style="left:1262.500px;top:721px"><b>g</b>.overplot</div>
<div class="t bc" style="left:1347px;top:721px"><b>g</b>.xy</div>
<div class="t bc" style="left:1391px;top:721px"><b>g</b>.scatterlayer.mlayer</div>
<div class="t bc" style="left:1544.500px;top:721px"><b>g</b>.trace.scatter.trace781706</div>
<div class="t bc" style="left:1738px;top:721px"><b>g</b>.fills</div>
<div class="t bc" style="left:1790px;top:721px"><b>g</b></div>
<div class="a" style="left:1808px;top:716px;width:83px;height:29px;background:#d3e3fd"></div>
<div class="t bc" style="left:1816px;top:721px;color:#8b0d4f">path.js-fill</div>
<svg style="left:1903px;top:727px" width="6" height="9"><path d="M0 0v9l6-4.500z" fill="#b0b0b0"/></svg>

<!-- style tabs -->
<div class="a" style="left:1191px;top:745px;width:729px;height:35px;background:#edf2fa;border-bottom:1px solid #d3e3fd"></div>
<div class="t" style="left:1203.500px;top:755px;color:#0b57d0">Styles</div>
<div class="a" style="left:1191px;top:776px;width:65px;height:4px;background:#0b57d0;border-radius:3px 3px 0 0"></div>
<div class="t tb" style="left:1268px;top:755px">Computed</div>
<div class="t tb" style="left:1366px;top:755px">Layout</div>
<div class="t tb" style="left:1438px;top:755px">Event Listeners</div>
<div class="t tb" style="left:1565px;top:755px">DOM Breakpoints</div>
<div class="t tb" style="left:1711px;top:755px">Properties</div>
<div class="t tb" style="left:1806px;top:755px">Accessibility</div>

<!-- filter -->
<div class="a" style="left:1197px;top:784px;width:394px;height:25px;background:#edf2fa;border-radius:13px"></div>
<svg style="left:1211px;top:789px" width="13" height="14" viewBox="0 0 13 14"><path d="M1 1h11L8 7v6.500L5 13V7z" fill="none" stroke="#474747" stroke-width="1.400"/></svg>
<div class="t tb" style="left:1233px;top:787px">Filter</div>
<div class="t" style="left:1600px;top:786px;font-size:13.500px;color:#333;font-weight:bold">:hov</div>
<div class="t" style="left:1636px;top:786px;font-size:13.500px;color:#333;font-weight:bold">.cls</div>
<svg style="left:1675px;top:788px" width="21" height="19" viewBox="0 0 21 19"><path d="M8 0v15M0 7.500h15" stroke="#474747" stroke-width="1.500"/><path d="M20 13v5h-5z" fill="#474747"/></svg>
<svg style="left:1711px;top:787px" width="15" height="20" viewBox="0 0 15 20"><path d="M1.500 1h12v9h-12zM1.500 5h12M1.500 8h12" fill="none" stroke="#474747" stroke-width="1.500"/><path d="M1.500 10h12v3h-4v6h-4v-6h-4z" fill="#474747"/></svg>
<svg style="left:1744px;top:787px" width="17" height="18" viewBox="0 0 17 18"><rect x="1" y="1" width="15" height="16" rx="1" fill="none" stroke="#474747" stroke-width="1.500"/><path d="M11 1v16" stroke="#474747" stroke-width="1.500"/><path d="M5 6v6l3-3z" fill="#474747"/></svg>
<div class="a" style="left:1191px;top:813px;width:585px;height:1px;background:#d3e3fd"></div>

<!-- styles pane -->
<div class="a" style="left:1191px;top:814px;width:585px;height:165px;overflow:hidden">
<div class="m" style="left:5px;top:2.500px;color:#555">element.style <span style="color:#222">{</span></div>
<div class="m" style="left:28px;top:23.500px"><span class="r">fill</span>:</div>
<div class="a" style="left:81px;top:26px;width:12px;height:12px;background:#ff7f0e;box-shadow:inset 0 0 0 1px rgba(0,0,0,.08)"></div>
<div class="m" style="left:97px;top:23.500px;color:#222">rgb(255, 127, 14);</div>
<div class="m" style="left:28px;top:41.500px;color:#222"><span class="r">fill-opacity</span>: 0.5;</div>
<div class="m" style="left:28px;top:59.500px;color:#222"><span class="r">stroke-width</span>: 0;</div>
<div class="m" style="left:5px;top:78.500px;color:#222">}</div>
<div class="a" style="left:0;top:100px;width:585px;height:1px;background:#d3e3fd"></div>
<div class="m" style="left:5px;top:103.500px;color:#555"><i>path[Attributes Style]</i> <span style="color:#222">{</span></div>
<div class="m" style="left:28px;top:124px;color:#222"><span class="r">d</span>:</div>
<div class="m" style="left:52px;top:124px;color:#222"><i>path("M 464.73 202.09 L 488.77 207.35 L 500.79 205.68 L 524.83</i></div>
<div class="m" style="left:52px;top:142px;color:#222"><i>203.32 L 536.85 200.88 L 557.89 193.88 L 560.88 184.66 L 566</i></div>
<div class="m" style="left:52px;top:160px;color:#222"><i>164.44 L 565.82 135 L 560.88 114.86 L 557.67 105.56 L 548.87</i></div>
</div>
<svg style="left:1779px;top:787px" width="13" height="10"><path d="M6.500 0 13 10H0z" fill="#9a9a9a"/></svg>
<div class="a" style="left:1780px;top:803px;width:11px;height:33px;background:#8c8c8c;border-radius:5px"></div>
<svg style="left:1779px;top:963px" width="13" height="10"><path d="M6.500 10 13 0H0z" fill="#9a9a9a"/></svg>
<div class="a" style="left:1795px;top:780px;width:1px;height:199px;background:#d3e3fd"></div>

<!-- box model -->
<div class="a" style="left:1796px;top:780px;width:124px;height:199px;background:#fff;overflow:hidden"></div>
<div class="bm" style="top:828px;height:24px;background:#f9cc9d;border-top:1px dashed #000"></div>
<div class="bm" style="top:852px;height:1px;background:#000"></div>
<div class="bm" style="top:853px;height:24px;background:#fddd9b"></div>
<div class="bm" style="top:877px;height:73px;background:#c3d08b;border-top:1px dashed #000"></div>
<div class="a" style="left:1799px;top:901px;width:100px;height:26px;background:#8cb6c0;border:1px solid #000;text-align:center;font-size:13.500px;line-height:25px;color:#222">auto×auto</div>
<div class="bm" style="top:950px;height:25px;background:#fddd9b;border-top:1px dashed #000"></div>
<div class="bm" style="top:975px;height:1px;background:#000"></div>
<div class="bm" style="top:976px;height:3px;background:#f9cc9d"></div>
<div class="z" style="top:832px">0</div><div class="z" style="top:856px">0</div><div class="z" style="top:880px">0</div><div class="z" style="top:929px">0</div><div class="z" style="top:954px">0</div>
<div class="a" style="left:1796px;top:878px;width:31px;height:23px;overflow:hidden;font-size:14px;line-height:24px;color:#333;white-space:nowrap;direction:rtl;text-align:right">dding</div>
<svg style="left:1903px;top:786px" width="15" height="11"><path d="M7.500 0 14 10H1z" fill="#9a9a9a"/></svg>
<div class="a" style="left:1905px;top:803px;width:10px;height:34px;background:#8c8c8c;border-radius:5px"></div>
<svg style="left:1903px;top:963px" width="15" height="11"><path d="M7.500 10 14 0H1z" fill="#9a9a9a"/></svg>

<!-- drawer -->
<div class="a" style="left:1191px;top:979px;width:729px;height:35px;background:#edf2fa;border-bottom:1px solid #d3e3fd;border-top:1px solid #d3e3fd"></div>
<svg style="left:1208px;top:988px" width="6" height="18"><circle cx="3" cy="3" r="2" fill="#474747"/><circle cx="3" cy="9" r="2" fill="#474747"/><circle cx="3" cy="15" r="2" fill="#474747"/></svg>
<div class="t tb" style="left:1238.500px;top:989px">Console</div>
<div class="t tb" style="left:1319px;top:989px;font-size:14.700px">AI assistance</div>
<div class="t" style="left:1444px;top:989px;color:#0b57d0">What's new</div>
<svg style="left:1527px;top:991px" width="11" height="11"><path d="M.500.500l10 10M10.500.500l-10 10" stroke="#474747" stroke-width="1.300"/></svg>
<div class="a" style="left:1431px;top:1010px;width:116px;height:4px;background:#0b57d0;border-radius:3px 3px 0 0"></div>
<svg style="left:1894px;top:990px" width="13" height="13"><path d="M.700.700l11.600 11.600M12.300.700.700 12.300" stroke="#474747" stroke-width="1.500"/></svg>
<svg style="left:1904px;top:1015px" width="12" height="5"><path d="M0 0h12M2 3h8" stroke="#9a9a9a" stroke-width="1.500"/></svg>
</body></html>
